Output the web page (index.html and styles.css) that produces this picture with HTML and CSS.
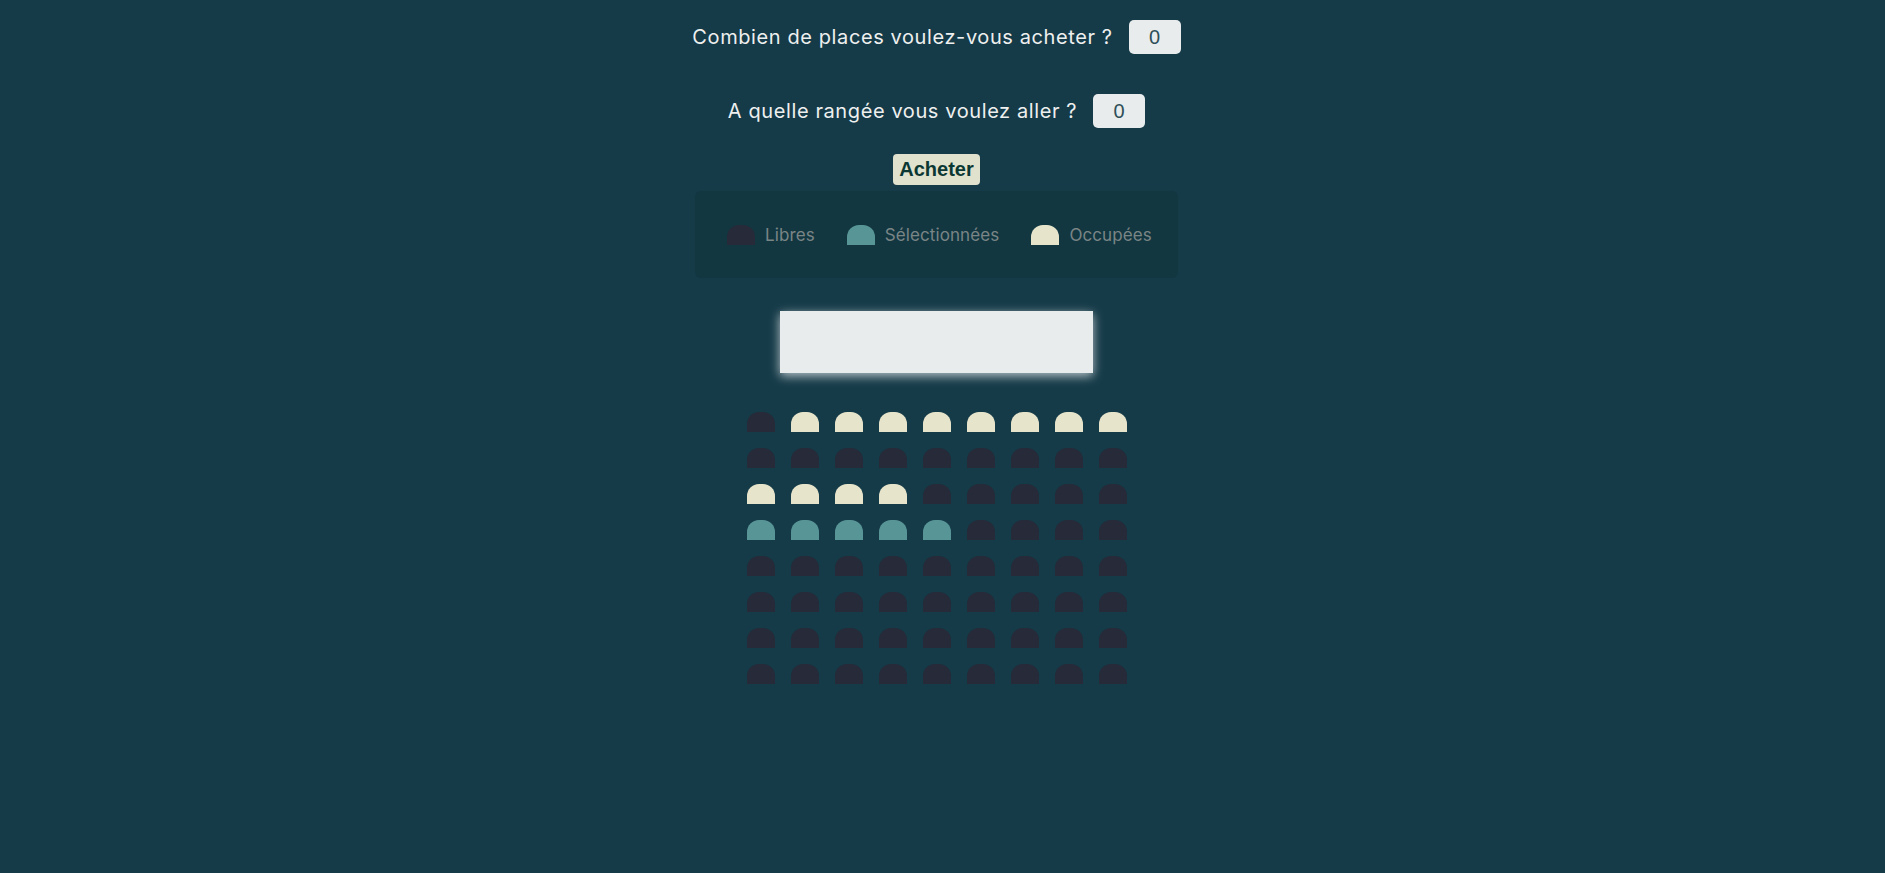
FILE: index.html
```html
<!DOCTYPE html>
<html lang="fr">
<head>
<meta charset="utf-8">
<title>Réservation</title>
<link rel="stylesheet" href="styles.css">
</head>
<body>
<main class="page">
  <div class="question q1">
    <label class="q-label" for="nb">Combien de places voulez-vous acheter ?</label>
    <input class="q-input" id="nb" type="text" value="0">
  </div>
  <div class="question q2">
    <label class="q-label" for="row">A quelle rangée vous voulez aller ?</label>
    <input class="q-input" id="row" type="text" value="0">
  </div>
  <button class="buy">Acheter</button>

  <ul class="showcase">
    <li class="legend-item"><span class="seat free"></span><small>Libres</small></li>
    <li class="legend-item"><span class="seat selected"></span><small>Sélectionnées</small></li>
    <li class="legend-item"><span class="seat occupied"></span><small>Occupées</small></li>
  </ul>

  <div class="screen"></div>

  <div class="seats">
    <span class="seat free"></span><span class="seat occupied"></span><span class="seat occupied"></span><span class="seat occupied"></span><span class="seat occupied"></span><span class="seat occupied"></span><span class="seat occupied"></span><span class="seat occupied"></span><span class="seat occupied"></span>
    <span class="seat free"></span><span class="seat free"></span><span class="seat free"></span><span class="seat free"></span><span class="seat free"></span><span class="seat free"></span><span class="seat free"></span><span class="seat free"></span><span class="seat free"></span>
    <span class="seat occupied"></span><span class="seat occupied"></span><span class="seat occupied"></span><span class="seat occupied"></span><span class="seat free"></span><span class="seat free"></span><span class="seat free"></span><span class="seat free"></span><span class="seat free"></span>
    <span class="seat selected"></span><span class="seat selected"></span><span class="seat selected"></span><span class="seat selected"></span><span class="seat selected"></span><span class="seat free"></span><span class="seat free"></span><span class="seat free"></span><span class="seat free"></span>
    <span class="seat free"></span><span class="seat free"></span><span class="seat free"></span><span class="seat free"></span><span class="seat free"></span><span class="seat free"></span><span class="seat free"></span><span class="seat free"></span><span class="seat free"></span>
    <span class="seat free"></span><span class="seat free"></span><span class="seat free"></span><span class="seat free"></span><span class="seat free"></span><span class="seat free"></span><span class="seat free"></span><span class="seat free"></span><span class="seat free"></span>
    <span class="seat free"></span><span class="seat free"></span><span class="seat free"></span><span class="seat free"></span><span class="seat free"></span><span class="seat free"></span><span class="seat free"></span><span class="seat free"></span><span class="seat free"></span>
    <span class="seat free"></span><span class="seat free"></span><span class="seat free"></span><span class="seat free"></span><span class="seat free"></span><span class="seat free"></span><span class="seat free"></span><span class="seat free"></span><span class="seat free"></span>
  </div>
</main>
</body>
</html>
```

FILE: styles.css
```css
html, body {
  margin: 0;
  padding: 0;
  background: #153a48;
}

body {
  min-height: 873px;
  font-family: "Inter", "Noto Sans", sans-serif;
  color: #eef0ef;
}

.page {
  box-sizing: border-box;
  width: 1873px;
  display: flex;
  flex-direction: column;
  align-items: center;
  padding-top: 20px;
}

.question {
  display: flex;
  align-items: center;
  gap: 16px;
}

.q2 {
  margin-top: 40px;
}

.q-label {
  font-size: 20px;
  letter-spacing: 0.6px;
  color: #eef0ef;
}

.q-input {
  box-sizing: border-box;
  width: 52px;
  height: 34px;
  border: none;
  border-radius: 5px;
  background: #e8ecec;
  color: #2e4f58;
  font-family: "Liberation Sans", Arial, sans-serif;
  font-size: 20px;
  text-align: center;
  padding: 0;
}

.buy {
  margin-top: 26px;
  width: 87px;
  height: 31px;
  border: none;
  border-radius: 4px;
  background: #e1e2cd;
  color: #0c3834;
  font-family: "Liberation Sans", Arial, sans-serif;
  font-weight: bold;
  font-size: 20px;
  padding: 0;
}

.showcase {
  box-sizing: border-box;
  list-style: none;
  margin: 6px 0 0;
  width: 483px;
  height: 87px;
  padding: 0 24px 0 32px;
  display: flex;
  align-items: center;
  gap: 32px;
  background: #123741;
  border-radius: 6px;
  color: #7a8586;
}

.legend-item {
  display: flex;
  align-items: center;
  gap: 10px;
}

.legend-item small {
  font-size: 17px;
  letter-spacing: 0.1px;
}

.seat {
  display: block;
  width: 28px;
  height: 20px;
  border-radius: 12px 12px 0 0;
}

.seat.free {
  background: #272a39;
}

.seat.selected {
  background: #589597;
}

.seat.occupied {
  background: #e6e4cb;
}

.screen {
  margin-top: 33px;
  width: 313px;
  height: 62px;
  background: #e8ecec;
  box-shadow: 0 3px 10px rgba(255, 255, 255, 0.7);
}

.seats {
  margin-top: 39px;
  display: grid;
  grid-template-columns: repeat(9, 28px);
  gap: 16px;
}
```
